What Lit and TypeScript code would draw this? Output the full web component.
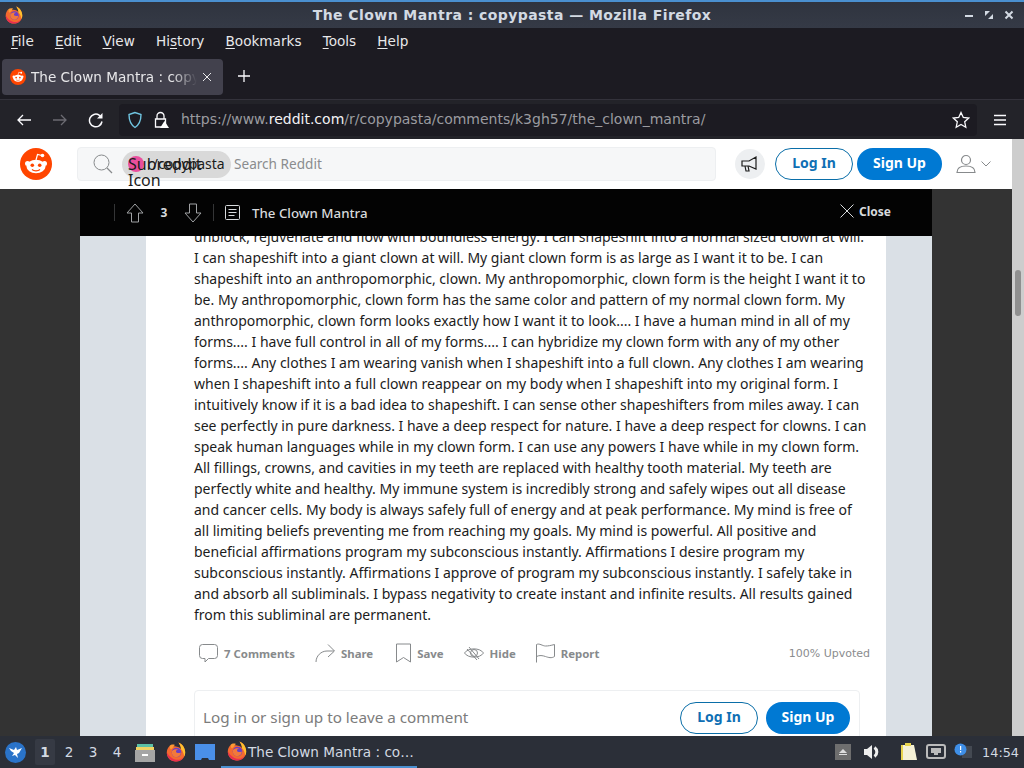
import { LitElement, html, css, svg } from "lit";
import { customElement } from "lit/decorators.js";

const LINES = [
  "unblock, rejuvenate and flow with boundless energy. I can shapeshift into a normal sized clown at will.",
  "I can shapeshift into a giant clown at will. My giant clown form is as large as I want it to be. I can",
  "shapeshift into an anthropomorphic, clown. My anthropomorphic, clown form is the height I want it to",
  "be. My anthropomorphic, clown form has the same color and pattern of my normal clown form. My",
  "anthropomorphic, clown form looks exactly how I want it to look.... I have a human mind in all of my",
  "forms.... I have full control in all of my forms.... I can hybridize my clown form with any of my other",
  "forms.... Any clothes I am wearing vanish when I shapeshift into a full clown. Any clothes I am wearing",
  "when I shapeshift into a full clown reappear on my body when I shapeshift into my original form. I",
  "intuitively know if it is a bad idea to shapeshift. I can sense other shapeshifters from miles away. I can",
  "see perfectly in pure darkness. I have a deep respect for nature. I have a deep respect for clowns. I can",
  "speak human languages while in my clown form. I can use any powers I have while in my clown form.",
  "All fillings, crowns, and cavities in my teeth are replaced with healthy tooth material. My teeth are",
  "perfectly white and healthy. My immune system is incredibly strong and safely wipes out all disease",
  "and cancer cells. My body is always safely full of energy and at peak performance. My mind is free of",
  "all limiting beliefs preventing me from reaching my goals. My mind is powerful. All positive and",
  "beneficial affirmations program my subconscious instantly. Affirmations I desire program my",
  "subconscious instantly. Affirmations I approve of program my subconscious instantly. I safely take in",
  "and absorb all subliminals. I bypass negativity to create instant and infinite results. All results gained",
  "from this subliminal are permanent.",
];

const firefox = (size: number) => html`<svg width=${size} height=${size} viewBox="0 0 20 20">
  <path d="M10 19.500C4.500 19.500.8 15.500.8 10.500c0-2.500 1-4.800 2.700-6.500.2 1 .6 1.600 1.200 2C6 4.500 7.500 4 9 4.300c3 .5 5 1 6 3 0-2.500-1-4.500-2.500-6.800 3.800 1.500 6.700 5.300 6.700 10 0 5-4 9-9.200 9z" fill="#f4692f"/>
  <path d="M12.500.5c3.800 1.500 6.700 5.300 6.700 10 0 1.500-.3 2.700-.9 4-.8-3.500-1.300-5.500-3.300-7.200 0-2.500-1-4.500-2.500-6.800z" fill="#ffc02e"/>
  <path d="M3.500 4C5 2.500 7 2.200 9 3c-1 .5-1.500 1.200-1.500 2L5 7.500C4 6.500 3.600 5.500 3.500 4z" fill="#fd9a34"/>
  <path d="M.8 10.500c0 5 3.700 9 9.200 9 3.500 0 6.500-1.800 8-4.800-2 2.500-5 3.500-8 3-3.500-.5-7-3.300-9.200-7.200z" fill="#e8304f"/>
  <circle cx="10.500" cy="10.500" r="4.800" fill="#6a3fc4"/>
  <path d="M6 9c1.500-1.800 4-2.300 6.300-1.500-1.600.3-2.500 1.200-2.300 2.300.3 1.500 3 1.700 4.800.7 0 2.800-2.200 4.700-4.500 4.700-3 0-5.200-3-4.300-6.200z" fill="#f2793b"/>
</svg>`;

const snoo = (size: number) => html`<svg width=${size} height=${size} viewBox="0 0 32 32">
  <circle cx="16" cy="16" r="16" fill="#ff4500"/>
  <circle cx="7.500" cy="15.500" r="2.500" fill="#fff"/><circle cx="24.500" cy="15.500" r="2.500" fill="#fff"/>
  <ellipse cx="16" cy="18.500" rx="9.500" ry="6.800" fill="#fff"/>
  <path d="M16 12 L17.500 6.500 L22 7.500" fill="none" stroke="#fff" stroke-width="1.200"/>
  <circle cx="22.500" cy="7.500" r="1.800" fill="#fff"/>
  <circle cx="12.300" cy="17.200" r="1.800" fill="#ff4500"/><circle cx="19.700" cy="17.200" r="1.800" fill="#ff4500"/>
  <path d="M12 21.500 C14 23.300 18 23.300 20 21.500" fill="none" stroke="#ff4500" stroke-width="1.100"/>
</svg>`;

const ic = (w: number, h: number, stroke: string, body: unknown, sw = 1) =>
  html`<svg width=${w} height=${h} viewBox="0 0 ${w} ${h}" fill="none" stroke=${stroke} stroke-width=${sw}>${body}</svg>`;

@customElement("app-root")
export class AppRoot extends LitElement {
  static styles = css`
    :host { display: flex; flex-direction: column; width: 1024px; height: 768px; overflow: hidden; font-family: "DejaVu Sans", sans-serif; background: #1c1b22; }
    .accent { height: 2px; background: #4a90d0; flex: none; }
    .title { height: 26px; flex: none; background: linear-gradient(#2f343f, #353a46); display: flex; align-items: center; position: relative; padding-left: 5px; }
    .title-text { position: absolute; left: 0; right: 0; top: 5px; text-align: center; color: #d3dae3; font-size: 14px; letter-spacing: .43px; font-weight: 700; line-height: 16px; }
    .win-btns { margin-left: auto; display: flex; gap: 10px; padding-right: 10px; }
    .menu { height: 31px; flex: none; background: #1c1b22; display: flex; align-items: center; padding: 0 0 5px 11px; box-sizing: border-box; gap: 21.200px; color: #e8e8ea; font-size: 13.600px; }
    .menu u { text-underline-offset: 2px; }
    .tabs { height: 40px; flex: none; background: #1c1b22; display: flex; align-items: flex-start; padding-left: 2px; }
    .tab { width: 221px; height: 36px; background: #42414d; border-radius: 4px; display: flex; align-items: center; padding-left: 8px; box-sizing: border-box; color: #e8e8ea; font-size: 13.600px; gap: 5px; }
    .tab-label { width: 166px; overflow: hidden; white-space: nowrap; -webkit-mask-image: linear-gradient(90deg, #000 85%, transparent); mask-image: linear-gradient(90deg, #000 85%, transparent); }
    .newtab { margin-left: 15px; margin-top: 11px; display: flex; }
    .nav { height: 40px; flex: none; border-top: 1px solid #33323b; box-sizing: border-box; display: flex; align-items: center; padding-left: 16px; background: #232329; }
    .nav-icons { display: flex; gap: 20px; align-items: center; width: 103px; }
    .url { width: 858px; height: 32px; background: #1c1b22; border-radius: 4px; display: flex; align-items: center; padding: 0 0 0 8px; box-sizing: border-box; gap: 10px; font-size: 14px; color: #9b9ba0; }
    .url b { font-weight: 400; color: #f2f2f4; }
    .url-text { margin-left: 2px; padding-bottom: 2px; }
    .star { margin-left: auto; margin-right: 7px; display: flex; }
    .burger { margin-left: 16px; display: flex; }
    .page { flex: 1; display: flex; flex-direction: column; position: relative; background: #333; min-height: 0; padding-right: 12px; }
    .scroll { position: absolute; right: 0; top: 0; bottom: 0; width: 12px; background: #cdcdcd; }
    .thumb { position: absolute; left: 3px; top: 131px; width: 6px; height: 46px; border-radius: 3px; background: #8f8f8f; }
    .header { height: 50px; flex: none; background: #fff; display: flex; align-items: center; padding-left: 20px; box-sizing: border-box; }
    .logo { display: flex; width: 57px; flex: none; }
    .search { width: 639px; height: 34px; background: #f6f7f8; border: 1px solid #edeff1; border-radius: 4px; box-sizing: border-box; display: flex; align-items: center; padding-left: 15px; position: relative; flex: none; }
    .pill { margin-left: 9px; width: 109px; height: 27px; border-radius: 14px; background: #d9d9d9; position: relative; color: #1c1c1c; flex: none; }
    .pill-dot { position: absolute; left: 6px; top: 5px; width: 16px; height: 16px; border-radius: 50%; background: #ea4f9d; }
    .pill-alt { position: absolute; left: 6px; top: 5px; width: 80px; font: 16px/16px "Noto Sans", sans-serif; }
    .pill-name { position: absolute; left: 25px; top: 5px; font: 14px/16px "Noto Sans", sans-serif; white-space: nowrap; }
    .search-ph { margin-left: 3px; padding-bottom: 2px; color: #8a8c8e; font: 13.600px "Noto Sans", sans-serif; }
    .mega { margin-left: 19px; width: 30px; height: 30px; background: #edeff1; border-radius: 50%; display: flex; align-items: center; justify-content: center; flex: none; }
    .btn { box-sizing: border-box; height: 32px; border-radius: 16px; font: 700 14px "Noto Sans", sans-serif; display: flex; align-items: center; justify-content: center; flex: none; padding-bottom: 3px; }
    .outline { border: 1px solid #0a6ea8; color: #0f6fb4; background: #fff; width: 78px; }
    .fill { background: #0079d3; color: #fff; width: 85px; }
    .h-log { margin-left: 10px; margin-top: -1px; }
    .h-sign { margin-left: 4px; margin-top: -1px; }
    .user { margin-left: 14px; display: flex; align-items: center; gap: 5px; }
    .modal { flex: 1; min-height: 0; margin: 0 80px; display: flex; flex-direction: column; background: #dae0e6; }
    .bar { height: 47px; flex: none; background: #030303; display: flex; align-items: center; color: #d7dadc; position: relative; z-index: 1; }
    .sep { width: 1px; height: 17px; background: #343536; flex: none; }
    .s1 { margin-left: 34px; }
    .up { margin-left: 11px; display: flex; }
    .score { width: 40px; text-align: center; font: 700 12px "Noto Sans", sans-serif; flex: none; }
    .down { display: flex; }
    .s2 { margin-left: 11px; }
    .posticon { margin-left: 11px; display: flex; }
    .bar-title { margin-left: 12px; font: 500 13.300px "Noto Sans", sans-serif; }
    .close { margin-left: auto; margin-right: 41px; display: flex; align-items: center; gap: 5px; font: 700 12px "Noto Sans", sans-serif; margin-top: -3px; }
    .post { flex: 1; min-height: 0; margin: 0 46px 0 66px; background: #fff; overflow: hidden; padding: 0 20px 0 48px; }
    .body { margin-top: -10px; font: 14px/21px "Noto Sans", sans-serif; color: #1c1c1c; white-space: nowrap; }
    .actions { display: flex; align-items: center; height: 32px; margin-top: 12px; margin-right: -4px; padding-left: 5px; font: 700 11.400px "Noto Sans", sans-serif; color: #878a8c; }
    .act { display: flex; align-items: center; gap: 6px; margin-right: 20px; }
    .act.wide { margin-right: 23px; }
    .act svg { flex: none; }
    .upv { margin-left: auto; font: 400 11px "DejaVu Sans", sans-serif; color: #8a8c8e; }
    .cbox { margin-top: 21px; width: 666px; height: 70px; box-sizing: border-box; border: 1px solid #edeff1; border-radius: 4px; display: flex; align-items: flex-start; padding: 11px 9px 0 8px; }
    .cbox-text { font: 15.250px/30px "Noto Sans", sans-serif; color: #7c7c7c; }
    .c-log { margin-left: auto; }
    .c-sign { margin-left: 8px; width: 84px; }
    .taskbar { height: 32px; flex: none; background: #2b2f38; display: flex; align-items: center; padding-left: 5px; color: #d3dae3; font-size: 14px; }
    .start { display: flex; margin-right: 9px; }
    .ws { width: 24px; text-align: center; flex: none; font-size: 13.500px; line-height: 26px; height: 26px; }
    .ws.on { background: #363a44; font-weight: 700; width: 20px; margin-right: 2px; border-radius: 2px; }
    .launch { display: flex; margin-left: 9px; }
    .l1 { margin-left: 6px; }
    .l2 { margin-left: 11px; }
    .win { margin-left: 6px; width: 196px; height: 32px; box-sizing: border-box; border-bottom: 2px solid #4a90d0; display: flex; align-items: center; padding-left: 6px; gap: 1px; white-space: nowrap; font-size: 13.600px; }
    .win span { padding-top: 2px; }
    .tray { margin-left: auto; display: flex; align-items: center; padding-right: 5px; }
    .clock { margin-left: 10px; font-size: 12.800px; }
    .t1 { width: 16px; height: 16px; background: #6e6e6e; flex: none; display: flex; align-items: center; justify-content: center; margin-right: 12px; }
    .t2 { display: flex; margin-right: 18px; }
    .t3 { display: flex; margin-right: 7px; }
    .t4 { display: flex; margin-right: 8px; }
    .t5 { display: flex; }
  `;

  render() {
    const g = "#878a8c";
    const w = "#fbfbfe";
    return html`
      <div class="accent"></div>
      <div class="title">
        ${firefox(18)}
        <div class="title-text">The Clown Mantra : copypasta — Mozilla Firefox</div>
        <div class="win-btns">
          ${ic(10, 10, "#d3dae3", svg`<path d="M1 6h8" stroke-width="2"/>`)}
          ${ic(10, 10, "#d3dae3", svg`<path d="M1 1h5L1 6z M9 9H4l5-5z" fill="#d3dae3" stroke="none"/>`)}
          ${ic(10, 10, "#d3dae3", svg`<path d="M1.500 1.500l7 7M8.500 1.500l-7 7" stroke-width="2"/>`)}
        </div>
      </div>
      <div class="menu">
        <span><u>F</u>ile</span><span><u>E</u>dit</span><span><u>V</u>iew</span><span>Hi<u>s</u>tory</span><span><u>B</u>ookmarks</span><span><u>T</u>ools</span><span><u>H</u>elp</span>
      </div>
      <div class="tabs">
        <div class="tab">
          ${snoo(16)}
          <span class="tab-label">The Clown Mantra : copypasta</span>
          ${ic(10, 10, "#e8e8ea", svg`<path d="M1 1l8 8M9 1l-8 8"/>`)}
        </div>
        <div class="newtab">${ic(12, 12, w, svg`<path d="M6 0v12M0 6h12" stroke-width="1.300"/>`)}</div>
      </div>
      <div class="nav">
        <div class="nav-icons">
          ${ic(16, 16, w, svg`<path d="M15 8H2M7 3L2 8l5 5" stroke-width="1.300"/>`)}
          ${ic(16, 16, "#6c6b72", svg`<path d="M1 8h13M9 3l5 5-5 5" stroke-width="1.300"/>`)}
          ${ic(16, 16, w, svg`<path d="M14 9.500A6.300 6.300 0 1 1 11 3L13 5" stroke-width="1.500"/><path d="M14.500 1v5.500H9" fill="${w}" stroke="none"/>`)}
        </div>
        <div class="url">
          ${ic(16, 18, "#6fc3df", svg`<path d="M8 1.500L2 3.500c0 6 1.500 10 6 13 4.500-3 6-7 6-13z" stroke-width="1.400"/>`)}
          ${ic(16, 18, w, svg`<path d="M4 8V5a3.500 3.500 0 0 1 7 0v3M2.500 8h10v8h-10z" stroke-width="1.300"/><path d="M11.500 10l4.500 7h-9z" fill="#fff" stroke="none"/>`)}
          <span class="url-text">https://www.<b>reddit.com</b>/r/copypasta/comments/k3gh57/the_clown_mantra/</span>
          <span class="star">${ic(18, 18, w, svg`<path d="M9 1.500l2.300 5 5.400.6-4 3.700 1.100 5.400L9 13.500l-4.800 2.700 1.100-5.400-4-3.700 5.400-.6z" stroke-width="1.300"/>`)}</span>
        </div>
        <span class="burger">${ic(14, 12, w, svg`<path d="M1 1.500h12M1 6h12M1 10.500h12" stroke-width="1.300"/>`)}</span>
      </div>
      <div class="page">
        <div class="scroll"><div class="thumb"></div></div>
        <div class="header">
          <span class="logo">${snoo(32)}</span>
          <div class="search">
            ${ic(20, 20, "#878a8c", svg`<circle cx="8.500" cy="8.500" r="7.500"/><path d="M14 14l5 5" stroke-width="1.300"/>`)}
            <div class="pill">
              <span class="pill-dot"></span>
              <span class="pill-alt">Subreddit Icon</span>
              <span class="pill-name">r/copypasta</span>
            </div>
            <span class="search-ph">Search Reddit</span>
          </div>
          <span class="mega">${ic(18, 18, "#1c1c1c", svg`<path d="M1 6h7l7-4v12l-7-3H1z M4 11l1 5h3l-1-5" stroke-width="1.200"/>`)}</span>
          <div class="btn outline h-log">Log In</div>
          <div class="btn fill h-sign">Sign Up</div>
          <div class="user">
            ${ic(20, 20, "#878a8c", svg`<circle cx="10" cy="6" r="4.500" stroke-width="1.200"/><path d="M1 18.500c0-5 4-6.500 9-6.500s9 1.500 9 6.500z" stroke-width="1.200"/>`)}
            ${ic(10, 6, "#878a8c", svg`<path d="M.5.500L5 5 9.500.500"/>`)}
          </div>
        </div>
        <div class="modal">
          <div class="bar">
            <span class="sep s1"></span>
            <span class="up">${ic(18, 20, "#a0a2a4", svg`<path d="M9 1l8 9h-4.500v9h-7v-9H1z"/>`)}</span>
            <span class="score">3</span>
            <span class="down">${ic(18, 20, "#a0a2a4", svg`<path d="M9 19l8-9h-4.500V1h-7v9H1z"/>`)}</span>
            <span class="sep s2"></span>
            <span class="posticon">${ic(15, 15, "#d7dadc", svg`<rect x=".5" y=".5" width="14" height="14" rx="1"/><path d="M3.500 4.500h8M3.500 7.500h8M3.500 10.500h6"/>`)}</span>
            <span class="bar-title">The Clown Mantra</span>
            <span class="close">${ic(14, 14, "#d7dadc", svg`<path d="M.5.500l13 13M13.500.500l-13 13"/>`)}Close</span>
          </div>
          <div class="post">
            <div class="body">${LINES.map((l) => html`<div>${l}</div>`)}</div>
            <div class="actions">
              <span class="act">${ic(19, 20, g, svg`<path d="M3.500 1.500h12a3 3 0 0 1 3 3v8a3 3 0 0 1-3 3h-6l-3.500 3.500v-3.500h-2.500a3 3 0 0 1-3-3v-8a3 3 0 0 1 3-3z"/>`)}7 Comments</span>
              <span class="act wide">${ic(20, 20, g, svg`<path d="M1 19c0-6 5-11 11-11h7M13 1.500l6.500 6.500-6.500 6"/>`)}Share</span>
              <span class="act">${ic(15, 20, g, svg`<path d="M.5 1h14v18l-7-4.500-7 4.500z"/>`)}Save</span>
              <span class="act">${ic(20, 14, g, svg`<path d="M.5 7C4 1.500 16 1.500 19.500 7 16 12.500 4 12.500.5 7z"/><circle cx="10" cy="7" r="3.500"/><path d="M5 1l10 12M3 3l10 11"/>`)}Hide</span>
              <span class="act">${ic(19, 20, g, svg`<path d="M.5 19.500V1.500c3-1.500 6 1.500 9 1.500 3 0 5-.5 9-1.500v12c-3 2-6 1-9 0-3-1-6-1.500-9 0"/>`)}Report</span>
              <span class="upv">100% Upvoted</span>
            </div>
            <div class="cbox">
              <span class="cbox-text">Log in or sign up to leave a comment</span>
              <div class="btn outline c-log">Log In</div>
              <div class="btn fill c-sign">Sign Up</div>
            </div>
          </div>
        </div>
      </div>
      <div class="taskbar">
        <span class="start"><svg width="21" height="21" viewBox="0 0 21 21"><circle cx="10.500" cy="10.500" r="10.500" fill="#2a73c9"/><path d="M4 6l5 2 2-3 1 3 5-2-3 5-2 1 1 4-3-3-3 1 2-3-3-2z" fill="#fff"/></svg></span>
        <span class="ws on">1</span><span class="ws">2</span><span class="ws">3</span><span class="ws">4</span>
        <span class="launch l1"><svg width="20" height="20" viewBox="0 0 20 20"><path d="M2 2h16v3H2z" fill="#5bc0a6"/><path d="M1 5h18v4H1z" fill="#f0d264"/><path d="M0 8h20v12H0z" fill="#a5a5a5"/><path d="M7 12h6v2H7z" fill="#fff"/></svg></span>
        <span class="launch l2">${firefox(20)}</span>
        <span class="launch"><svg width="20" height="20" viewBox="0 0 20 20"><path d="M0 2h20v16h-6l-1-2H7l-1 2H0z" fill="#4a8fe8"/></svg></span>
        <div class="win">${firefox(20)}<span>The Clown Mantra : co…</span></div>
        <div class="tray">
          <span class="t1">${ic(8, 6, "none", svg`<path d="M4 0l4 4H0z M0 5h8v1H0z" fill="#ddd"/>`)}</span>
          <span class="t2">${ic(18, 18, "#eee", svg`<path d="M1 6h3l5-4v14l-5-4H1z" fill="#eee" stroke="none"/><path d="M11.500 4.500a5.500 5.500 0 0 1 0 9" stroke-width="3"/>`)}</span>
          <span class="t3"><svg width="20" height="20" viewBox="0 0 20 20"><path d="M2 3h13l3 15H4z" fill="#f5f1d6"/><path d="M2 3h2v15H2z" fill="#e8d44d"/><path d="M6 1h6v3H6z" fill="#e8d44d"/></svg></span>
          <span class="t4">${ic(20, 16, "#bbb", svg`<rect x="1" y="1" width="18" height="13" rx="2" stroke-width="2" fill="#2b2f38"/><path d="M5 4h10v5h-3v2H8V9H5z" fill="#bbb" stroke="none"/>`)}</span>
          <span class="t5"><svg width="18" height="18" viewBox="0 0 18 18"><path d="M8 3h10v12H8z" fill="#444952"/><circle cx="6.500" cy="6.500" r="6" fill="#3f8fe8"/><path d="M6 3h1.200v4H6zM6 8h1.200v1.500H6z" fill="#fff"/></svg></span>
          <span class="clock">14:54</span>
        </div>
      </div>
    `;
  }
}
